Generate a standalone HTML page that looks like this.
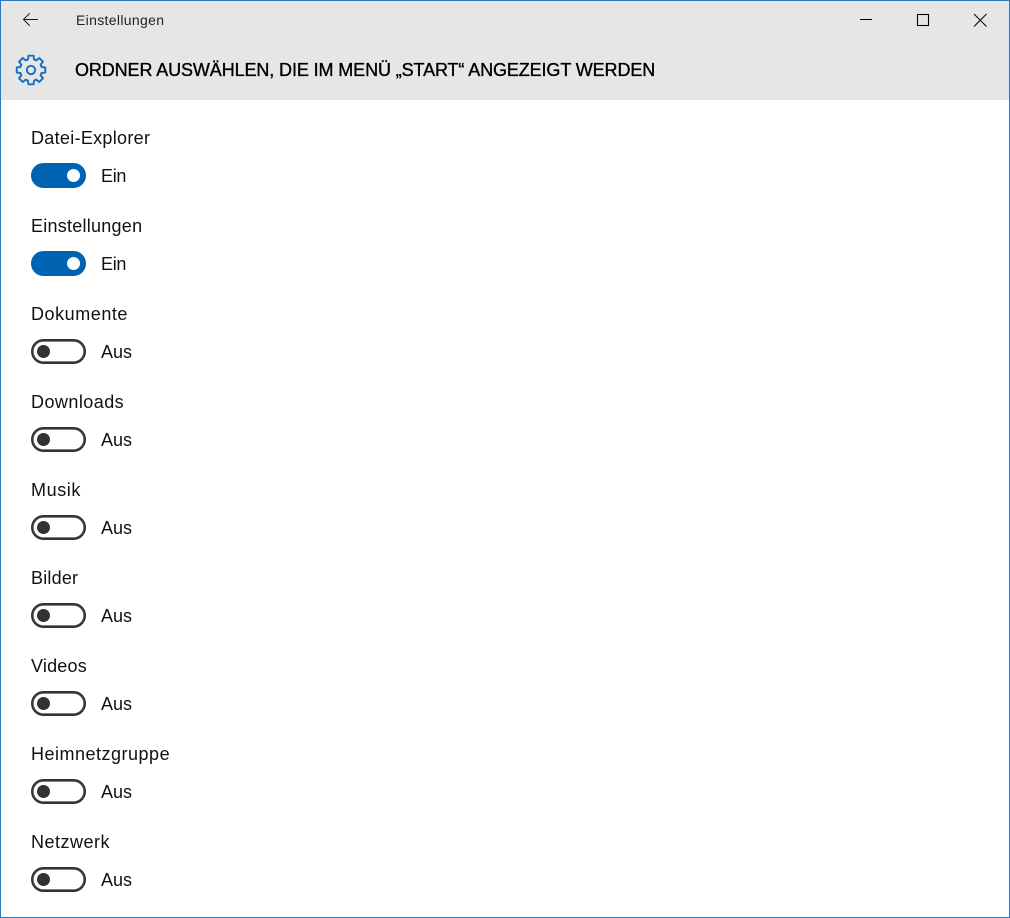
<!DOCTYPE html>
<html lang="de"><head><meta charset="utf-8"><title>Einstellungen</title>
<style>
html,body{margin:0;padding:0;background:#fff}
body{width:1010px;height:918px;position:relative;overflow:hidden;font-family:"Liberation Sans",sans-serif;color:#111}
#frame{position:absolute;left:0;top:0;width:1008px;height:916px;border:1px solid #2b79c2;z-index:5;pointer-events:none}
#bar{position:absolute;left:0;top:0;width:1010px;height:100px;background:#e6e6e6}
.t{position:absolute;white-space:nowrap;font-size:18px;line-height:24px}
.sw{position:absolute;left:31px;width:55px;height:25px;box-sizing:border-box;border-radius:12.5px;border:2px solid #333;box-shadow:inset 0 0 0 .6px #333}
.sw.on{background:#0063b1;border-color:#0063b1;box-shadow:none}
.sw i{position:absolute;width:13.5px;height:13.5px;border-radius:50%;top:3.75px;left:3.75px;background:#333}
.sw.on i{background:#fff;left:33.5px}
svg{position:absolute;overflow:visible}
</style></head><body>
<div id="bar"></div>
<div id="frame"></div>
<svg style="left:0;top:0" width="1010" height="100" fill="none">
<path d="M38 19.5H23.5M29.8 13.2L23.5 19.5L29.8 25.8" stroke="#111" stroke-width="1"/>
<path d="M860 19.5H872" stroke="#000" stroke-width="1"/>
<rect x="917.5" y="14.5" width="11" height="11" stroke="#000" stroke-width="1.1"/>
<path d="M974 14L986.5 26.5M986.5 14L974 26.5" stroke="#000" stroke-width="1"/>
<g transform="translate(31 70)" stroke="#1570c0" stroke-width="1.9" stroke-linejoin="round" stroke-linecap="round">
<path d="M-4.21 -10.16L-3 -10.6L-2.6 -14.3H2.6L3 -10.6L4.21 -10.16"/>
<path transform="rotate(45)" d="M-4.21 -10.16L-3 -10.6L-2.6 -14.3H2.6L3 -10.6L4.21 -10.16"/>
<path transform="rotate(90)" d="M-4.21 -10.16L-3 -10.6L-2.6 -14.3H2.6L3 -10.6L4.21 -10.16"/>
<path transform="rotate(135)" d="M-4.21 -10.16L-3 -10.6L-2.6 -14.3H2.6L3 -10.6L4.21 -10.16"/>
<path transform="rotate(180)" d="M-4.21 -10.16L-3 -10.6L-2.6 -14.3H2.6L3 -10.6L4.21 -10.16"/>
<path transform="rotate(225)" d="M-4.21 -10.16L-3 -10.6L-2.6 -14.3H2.6L3 -10.6L4.21 -10.16"/>
<path transform="rotate(270)" d="M-4.21 -10.16L-3 -10.6L-2.6 -14.3H2.6L3 -10.6L4.21 -10.16"/>
<path transform="rotate(315)" d="M-4.21 -10.16L-3 -10.6L-2.6 -14.3H2.6L3 -10.6L4.21 -10.16"/>
<circle r="4.2"/>
</g>
</svg>
<div class="t" style="left:76px;top:8px;font-size:14px;color:#222;letter-spacing:.33px">Einstellungen</div>
<div class="t" style="left:75px;top:58px;-webkit-text-stroke:.35px #000;color:#000;letter-spacing:-.11px">ORDNER AUSWÄHLEN, DIE IM MENÜ „START“ ANGEZEIGT WERDEN</div>

<div class="t" style="left:31px;top:126px;letter-spacing:.3px">Datei-Explorer</div><div class="sw on" style="top:163px"><i></i></div><div class="t" style="left:101px;top:164px;letter-spacing:-.3px">Ein</div>
<div class="t" style="left:31px;top:214px;letter-spacing:.25px">Einstellungen</div><div class="sw on" style="top:251px"><i></i></div><div class="t" style="left:101px;top:252px;letter-spacing:-.3px">Ein</div>
<div class="t" style="left:31px;top:302px;letter-spacing:.55px">Dokumente</div><div class="sw" style="top:339px"><i></i></div><div class="t" style="left:101px;top:340px">Aus</div>
<div class="t" style="left:31px;top:390px;letter-spacing:.45px">Downloads</div><div class="sw" style="top:427px"><i></i></div><div class="t" style="left:101px;top:428px">Aus</div>
<div class="t" style="left:31px;top:478px;letter-spacing:.6px">Musik</div><div class="sw" style="top:515px"><i></i></div><div class="t" style="left:101px;top:516px">Aus</div>
<div class="t" style="left:31px;top:566px;letter-spacing:.2px">Bilder</div><div class="sw" style="top:603px"><i></i></div><div class="t" style="left:101px;top:604px">Aus</div>
<div class="t" style="left:31px;top:654px;letter-spacing:.2px">Videos</div><div class="sw" style="top:691px"><i></i></div><div class="t" style="left:101px;top:692px">Aus</div>
<div class="t" style="left:31px;top:742px;letter-spacing:.5px">Heimnetzgruppe</div><div class="sw" style="top:779px"><i></i></div><div class="t" style="left:101px;top:780px">Aus</div>
<div class="t" style="left:31px;top:830px;letter-spacing:.5px">Netzwerk</div><div class="sw" style="top:867px"><i></i></div><div class="t" style="left:101px;top:868px">Aus</div>
</body></html>
